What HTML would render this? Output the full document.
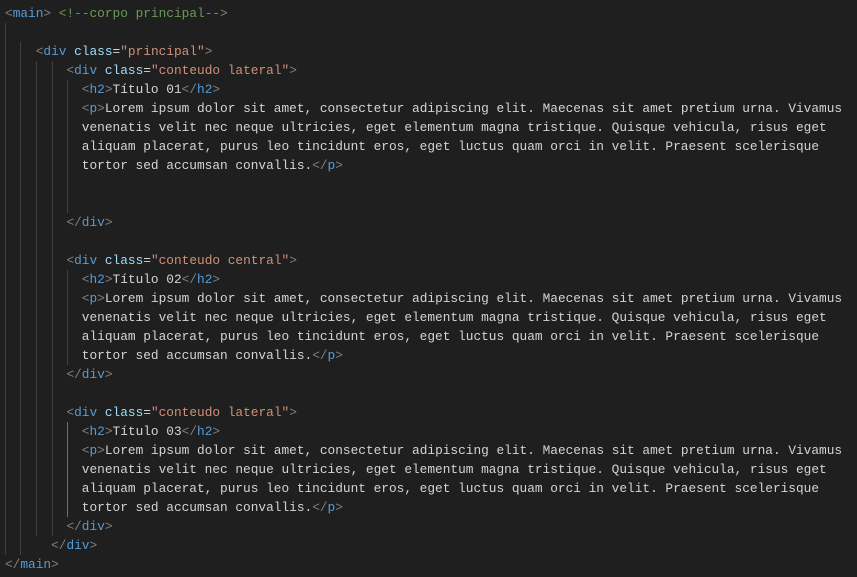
<!DOCTYPE html>
<html><head><meta charset="utf-8"><style>
html,body{margin:0;padding:0;background:#1f1f1f;width:857px;height:577px;overflow:hidden}
#c{position:absolute;left:5px;top:4px;font-family:"Liberation Mono","DejaVu Sans Mono",monospace;font-size:12.8px;color:#d4d4d4}
.l{height:19px;line-height:19px;white-space:pre}
.b{color:#808080}.t{color:#569cd6}.a{color:#9cdcfe}.s{color:#ce9178}.m{color:#6a9955}
.g{position:absolute;width:1px;background:#404040}
</style></head><body>
<div class="g" style="left:5px;top:23px;height:532px"></div>
<div class="g" style="left:20px;top:42px;height:513px"></div>
<div class="g" style="left:36px;top:61px;height:475px"></div>
<div class="g" style="left:52px;top:61px;height:475px"></div>
<div class="g" style="left:67px;top:80px;height:133px"></div>
<div class="g" style="left:67px;top:270px;height:95px"></div>
<div class="g" style="left:67px;top:422px;height:95px;background:#707070"></div>
<div id="c">
<div class="l"><span class="b">&lt;</span><span class="t">main</span><span class="b">&gt;</span> <span class="m">&lt;!--corpo principal--&gt;</span></div>
<div class="l"> </div>
<div class="l">    <span class="b">&lt;</span><span class="t">div</span> <span class="a">class</span>=<span class="s">"principal"</span><span class="b">&gt;</span></div>
<div class="l">        <span class="b">&lt;</span><span class="t">div</span> <span class="a">class</span>=<span class="s">"conteudo lateral"</span><span class="b">&gt;</span></div>
<div class="l">          <span class="b">&lt;</span><span class="t">h2</span><span class="b">&gt;</span>Título 01<span class="b">&lt;/</span><span class="t">h2</span><span class="b">&gt;</span></div>
<div class="l">          <span class="b">&lt;</span><span class="t">p</span><span class="b">&gt;</span>Lorem ipsum dolor sit amet, consectetur adipiscing elit. Maecenas sit amet pretium urna. Vivamus</div>
<div class="l">          venenatis velit nec neque ultricies, eget elementum magna tristique. Quisque vehicula, risus eget</div>
<div class="l">          aliquam placerat, purus leo tincidunt eros, eget luctus quam orci in velit. Praesent scelerisque</div>
<div class="l">          tortor sed accumsan convallis.<span class="b">&lt;/</span><span class="t">p</span><span class="b">&gt;</span></div>
<div class="l"> </div>
<div class="l"> </div>
<div class="l">        <span class="b">&lt;/</span><span class="t">div</span><span class="b">&gt;</span></div>
<div class="l"> </div>
<div class="l">        <span class="b">&lt;</span><span class="t">div</span> <span class="a">class</span>=<span class="s">"conteudo central"</span><span class="b">&gt;</span></div>
<div class="l">          <span class="b">&lt;</span><span class="t">h2</span><span class="b">&gt;</span>Título 02<span class="b">&lt;/</span><span class="t">h2</span><span class="b">&gt;</span></div>
<div class="l">          <span class="b">&lt;</span><span class="t">p</span><span class="b">&gt;</span>Lorem ipsum dolor sit amet, consectetur adipiscing elit. Maecenas sit amet pretium urna. Vivamus</div>
<div class="l">          venenatis velit nec neque ultricies, eget elementum magna tristique. Quisque vehicula, risus eget</div>
<div class="l">          aliquam placerat, purus leo tincidunt eros, eget luctus quam orci in velit. Praesent scelerisque</div>
<div class="l">          tortor sed accumsan convallis.<span class="b">&lt;/</span><span class="t">p</span><span class="b">&gt;</span></div>
<div class="l">        <span class="b">&lt;/</span><span class="t">div</span><span class="b">&gt;</span></div>
<div class="l"> </div>
<div class="l">        <span class="b">&lt;</span><span class="t">div</span> <span class="a">class</span>=<span class="s">"conteudo lateral"</span><span class="b">&gt;</span></div>
<div class="l">          <span class="b">&lt;</span><span class="t">h2</span><span class="b">&gt;</span>Título 03<span class="b">&lt;/</span><span class="t">h2</span><span class="b">&gt;</span></div>
<div class="l">          <span class="b">&lt;</span><span class="t">p</span><span class="b">&gt;</span>Lorem ipsum dolor sit amet, consectetur adipiscing elit. Maecenas sit amet pretium urna. Vivamus</div>
<div class="l">          venenatis velit nec neque ultricies, eget elementum magna tristique. Quisque vehicula, risus eget</div>
<div class="l">          aliquam placerat, purus leo tincidunt eros, eget luctus quam orci in velit. Praesent scelerisque</div>
<div class="l">          tortor sed accumsan convallis.<span class="b">&lt;/</span><span class="t">p</span><span class="b">&gt;</span></div>
<div class="l">        <span class="b">&lt;/</span><span class="t">div</span><span class="b">&gt;</span></div>
<div class="l">      <span class="b">&lt;/</span><span class="t">div</span><span class="b">&gt;</span></div>
<div class="l"><span class="b">&lt;/</span><span class="t">main</span><span class="b">&gt;</span></div>
</div>
</body></html>
